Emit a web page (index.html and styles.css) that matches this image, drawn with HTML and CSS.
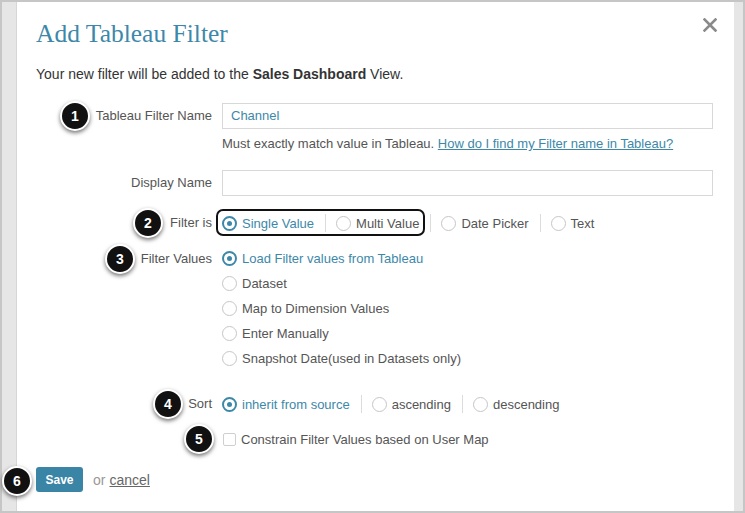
FILE: index.html
```html
<!DOCTYPE html>
<html>
<head>
<meta charset="utf-8">
<link rel="stylesheet" href="styles.css">
</head>
<body>
<div class="page">
  <div class="shell">
    <div class="modal">
      <button class="close" aria-label="Close">
        <svg width="14" height="14" viewBox="0 0 14 14"><path d="M1.5 1.5 L12.5 12.5 M12.5 1.5 L1.5 12.5" stroke="#8a8a8a" stroke-width="2.6" stroke-linecap="square"/></svg>
      </button>
      <h1 class="title">Add Tableau Filter</h1>
      <p class="intro">Your new filter will be added to the <b>Sales Dashboard</b> View.</p>

      <div class="row row-name">
        <label class="lbl">Tableau Filter Name</label>
        <div class="input filled">Channel</div>
      </div>
      <p class="help">Must exactly match value in Tableau. <a href="#">How do I find my Filter name in Tableau?</a></p>

      <div class="row row-display">
        <label class="lbl">Display Name</label>
        <div class="input"></div>
      </div>

      <div class="row row-type">
        <label class="lbl">Filter is</label>
        <div class="inline">
          <span class="boxed">
            <span class="radio on"><span class="dot"></span>Single Value</span>
            <span class="sep"></span>
            <span class="radio"><span class="dot"></span>Multi Value</span>
          </span>
          <span class="sep"></span>
          <span class="radio"><span class="dot"></span>Date Picker</span>
          <span class="sep"></span>
          <span class="radio"><span class="dot"></span>Text</span>
        </div>
      </div>

      <div class="row row-values">
        <label class="lbl">Filter Values</label>
        <div class="stack">
          <span class="radio on"><span class="dot"></span>Load Filter values from Tableau</span>
          <span class="radio"><span class="dot"></span>Dataset</span>
          <span class="radio"><span class="dot"></span>Map to Dimension Values</span>
          <span class="radio"><span class="dot"></span>Enter Manually</span>
          <span class="radio"><span class="dot"></span>Snapshot Date(used in Datasets only)</span>
        </div>
      </div>

      <div class="row row-sort">
        <label class="lbl">Sort</label>
        <div class="inline">
          <span class="radio on"><span class="dot"></span>inherit from source</span>
          <span class="sep"></span>
          <span class="radio"><span class="dot"></span>ascending</span>
          <span class="sep"></span>
          <span class="radio"><span class="dot"></span>descending</span>
        </div>
      </div>

      <div class="row row-check">
        <span></span>
        <span class="check"><span class="box"></span>Constrain Filter Values based on User Map</span>
      </div>

      <div class="footer">
        <button class="save">Save</button>
        <span class="or">or</span>
        <a class="cancel" href="#">cancel</a>
      </div>
    </div>
  </div>

  <span class="badge b1">1</span>
  <span class="badge b2">2</span>
  <span class="badge b3">3</span>
  <span class="badge b4">4</span>
  <span class="badge b5">5</span>
  <span class="badge b6">6</span>
</div>
</body>
</html>
```

FILE: styles.css
```css
* { box-sizing: border-box; }
html, body { margin: 0; padding: 0; }
body {
  font-family: "Liberation Sans", Arial, sans-serif;
  font-size: 13px;
  color: #444;
  background: #c6c6c6;
}
.page {
  position: relative;
  width: 745px;
  height: 513px;
  padding: 2px;
}
.shell {
  height: 100%;
  background: #e6e6e6;
  padding: 0 9px 0 14px;
  display: flex;
}
.modal {
  position: relative;
  flex: 1;
  background: #fff;
  border-left: 1px solid #d6d6d6;
  padding: 17px 21px 0 19px;
}
.close {
  position: absolute;
  top: 16px;
  right: 17px;
  border: 0;
  background: none;
  padding: 0;
  width: 14px;
  height: 14px;
  cursor: pointer;
}
.close svg { display: block; }
.title {
  margin: 0;
  font-family: "Liberation Serif", "Times New Roman", serif;
  font-weight: normal;
  font-size: 25.5px;
  line-height: 30px;
  color: #3d88a9;
}
.intro {
  margin: 16px 0 0;
  font-size: 14px;
  line-height: 18px;
  color: #333;
}
.intro b { color: #333; }
.row {
  display: grid;
  grid-template-columns: 176px 1fr;
  column-gap: 10px;
  align-items: center;
}
.lbl {
  text-align: right;
  color: #555;
  line-height: 20px;
}
.input {
  height: 26px;
  border: 1px solid #d8d8d8;
  padding: 0 8px;
  line-height: 24px;
}
.input.filled { color: #3d88a9; }
.row-name { margin-top: 20px; }
.help {
  margin: 6px 0 0 186px;
  line-height: 18px;
  color: #555;
}
.help a { color: #3d88a9; }
.row-display { margin-top: 17px; }
.row-type { margin-top: 17px; height: 20px; }
.inline {
  display: flex;
  align-items: center;
  height: 20px;
}
.boxed {
  position: relative;
  display: flex;
  align-items: center;
}
.boxed::after {
  content: "";
  position: absolute;
  top: -5px;
  bottom: -4px;
  left: -6px;
  right: -6px;
  border: 2px solid #111;
  border-radius: 7px;
}
.radio {
  display: inline-flex;
  align-items: center;
  gap: 5px;
  color: #555;
  white-space: nowrap;
}
.dot {
  position: relative;
  width: 15px;
  height: 15px;
  border-radius: 50%;
  border: 1px solid #c6c6c6;
  flex: none;
}
.radio.on { color: #3d88a9; }
.radio.on .dot { border: 2px solid #3d88a9; }
.radio.on .dot::after {
  content: "";
  position: absolute;
  left: 50%;
  top: 50%;
  width: 5px;
  height: 5px;
  margin: -2.5px 0 0 -2.5px;
  border-radius: 50%;
  background: #3d88a9;
}
.sep {
  width: 1px;
  height: 18px;
  background: #dcdcdc;
  margin: 0 10px 0 11px;
}
.row-values { margin-top: 13px; align-items: start; }
.row-values .lbl { line-height: 25px; }
.stack { display: flex; flex-direction: column; }
.stack .radio { height: 25px; }
.row-sort { margin-top: 23px; }
.row-check { margin-top: 15px; }
.check {
  display: inline-flex;
  align-items: center;
  gap: 5px;
  height: 20px;
  color: #555;
  padding-left: 1px;
}
.box {
  width: 13px;
  height: 13px;
  border: 1px solid #cfcfcf;
  border-radius: 2px;
}
.footer {
  margin-top: 18px;
  display: flex;
  align-items: center;
  font-size: 14px;
}
.save {
  width: 47px;
  height: 25px;
  border: 0;
  border-radius: 3px;
  background: #3a84a5;
  color: #fff;
  font-family: "Liberation Sans", Arial, sans-serif;
  font-weight: bold;
  font-size: 12px;
  padding: 0;
}
.or { margin-left: 10px; color: #999; }
.cancel { margin-left: 4px; color: #666; }
.badge {
  position: absolute;
  width: 30px;
  height: 30px;
  margin: -15px 0 0 -15px;
  border-radius: 50%;
  background: #111;
  border: 2px solid #fff;
  box-shadow: 0 2px 4px rgba(0,0,0,0.55);
  color: #fff;
  font-weight: bold;
  font-size: 14px;
  line-height: 26px;
  text-align: center;
}
.b1 { left: 75px; top: 116px; }
.b2 { left: 148px; top: 223px; }
.b3 { left: 120px; top: 259px; }
.b4 { left: 168px; top: 404px; }
.b5 { left: 199px; top: 439px; }
.b6 { left: 17px; top: 481px; }
```
